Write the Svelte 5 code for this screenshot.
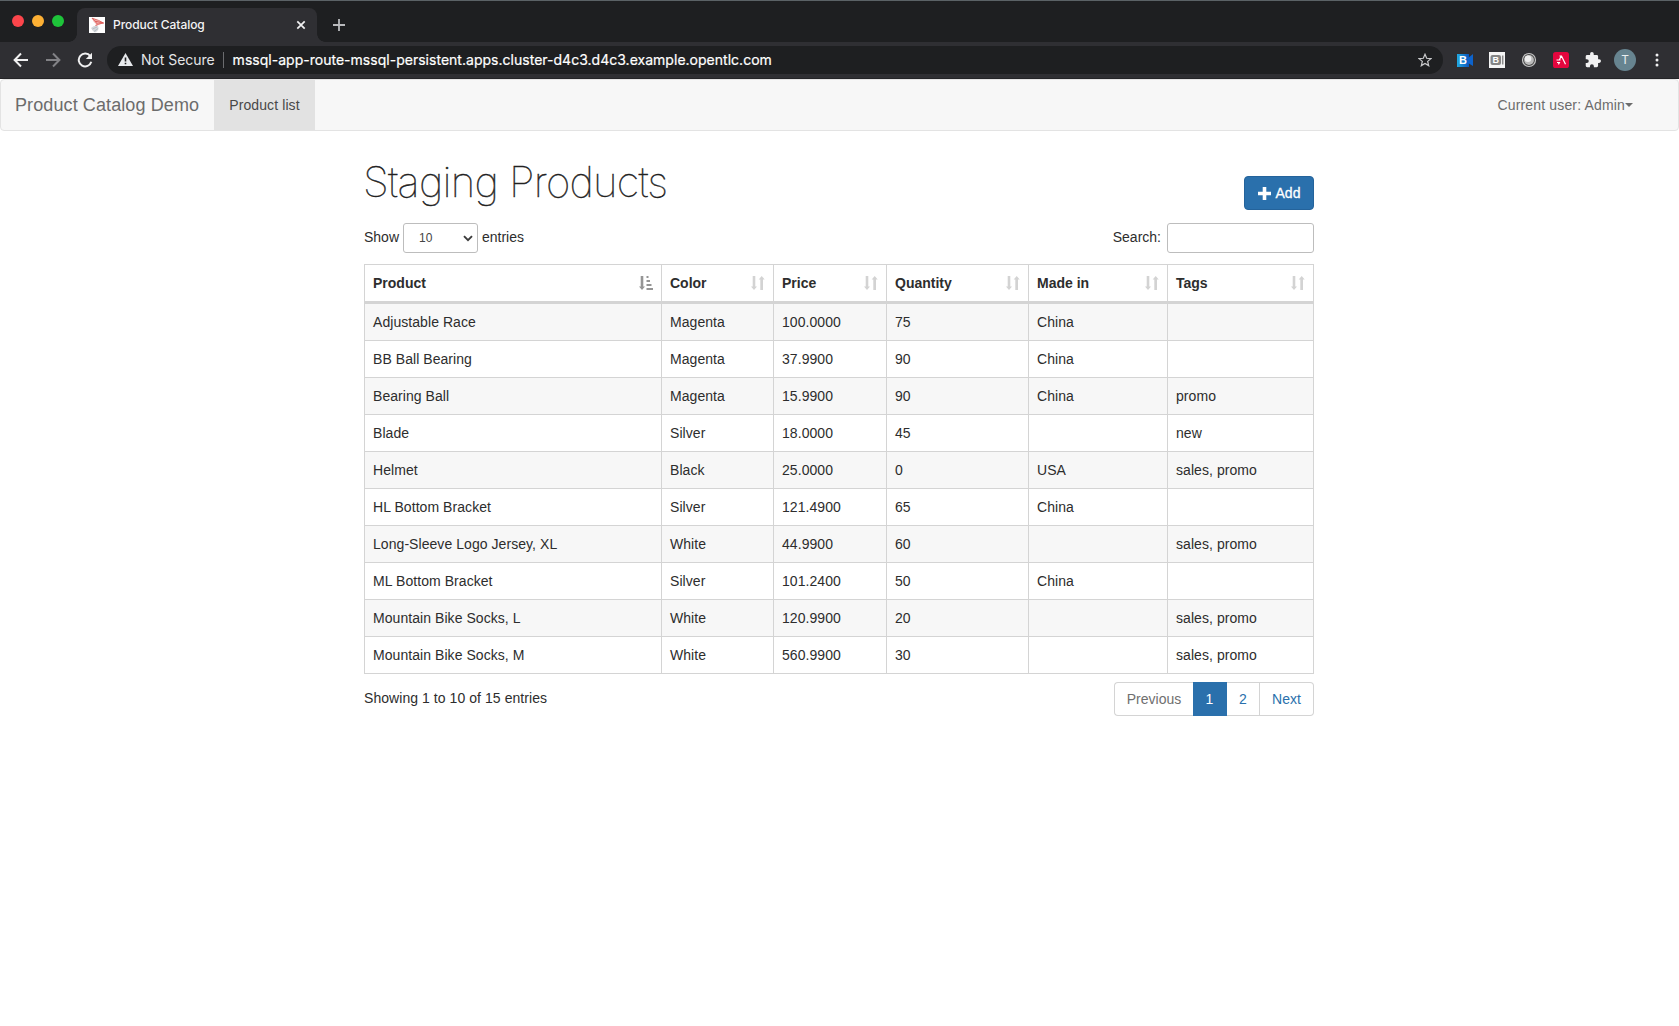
<script>
  const columns = ['Product', 'Color', 'Price', 'Quantity', 'Made in', 'Tags'];
  const rows = [
    ['Adjustable Race', 'Magenta', '100.0000', '75', 'China', ''],
    ['BB Ball Bearing', 'Magenta', '37.9900', '90', 'China', ''],
    ['Bearing Ball', 'Magenta', '15.9900', '90', 'China', 'promo'],
    ['Blade', 'Silver', '18.0000', '45', '', 'new'],
    ['Helmet', 'Black', '25.0000', '0', 'USA', 'sales, promo'],
    ['HL Bottom Bracket', 'Silver', '121.4900', '65', 'China', ''],
    ['Long-Sleeve Logo Jersey, XL', 'White', '44.9900', '60', '', 'sales, promo'],
    ['ML Bottom Bracket', 'Silver', '101.2400', '50', 'China', ''],
    ['Mountain Bike Socks, L', 'White', '120.9900', '20', '', 'sales, promo'],
    ['Mountain Bike Socks, M', 'White', '560.9900', '30', '', 'sales, promo']
  ];
</script>

<div class="window">
  <header class="tabstrip">
    <div class="lights"><i class="red"></i><i class="amber"></i><i class="green"></i></div>
    <div class="tab">
      <svg class="favicon" width="16" height="16" viewBox="0 0 16 16">
        <rect width="16" height="16" fill="#fff" />
        <path d="M3 1.2 L8 3.2 L14.5 6 L9.5 8 L5 11 L7 7 L4.5 4.5Z" fill="#f3b5b2" />
        <path d="M3 1.2 L6 4.2 L14.5 6 L8.5 7.2 L4.5 11 M6 4.2 L8.5 7.2 M3 1.2 L9.5 3.4 L14.5 6" fill="none" stroke="#dc5a57" stroke-width=".9" />
        <path d="M2 11 Q5 8 9 9 Q11 13 6 15.5 Q4 15 2 11Z" fill="#d5d9dd" />
        <path d="M3.5 12 L8 10 M5 14.5 L9 11.5" stroke="#aab1b9" stroke-width=".7" />
      </svg>
      <span class="title">Product Catalog</span>
      <svg class="close" width="10" height="10" viewBox="0 0 10 10"><path d="M1.3 1.3 L8.7 8.7 M8.7 1.3 L1.3 8.7" stroke="#f1f1f2" stroke-width="1.7" /></svg>
    </div>
    <svg class="plus" width="12" height="12" viewBox="0 0 12 12"><path d="M6 0V12M0 6H12" stroke="#b9babd" stroke-width="1.8" /></svg>
  </header>

  <div class="toolbar">
    <svg class="nav" width="16" height="16" viewBox="0 0 16 16"><path d="M15 8H2 M8 1.5 L1.6 8 L8 14.5" fill="none" stroke="#f0f0f1" stroke-width="2" /></svg>
    <svg class="nav" width="16" height="16" viewBox="0 0 16 16"><path d="M1 8H14 M8 1.5 L14.4 8 L8 14.5" fill="none" stroke="#828286" stroke-width="2" /></svg>
    <svg class="nav" width="16" height="16" viewBox="0 0 16 16"><path d="M13.3 4.2 A6.4 6.4 0 1 0 14.3 9.8" fill="none" stroke="#f0f0f1" stroke-width="2" /><path d="M15 .8V7H8.8Z" fill="#f0f0f1" /></svg>
    <div class="address">
      <svg width="15" height="13" viewBox="0 0 15 13"><path d="M7.5 0 L15 13H0Z" fill="#e8eaed" /><path d="M7.5 4.6V8.6M7.5 9.8V11.3" stroke="#1e1f21" stroke-width="1.6" /></svg>
      <span class="secure">Not Secure</span>
      <span class="bar"></span>
      <span class="url">mssql-app-route-mssql-persistent.apps.cluster-d4c3.d4c3.example.opentlc.com</span>
      <svg class="star" width="14" height="14" viewBox="0 0 24 24"><path d="M12 2.2 L14.9 9 L22.2 9.6 L16.6 14.4 L18.3 21.6 L12 17.8 L5.7 21.6 L7.4 14.4 L1.8 9.6 L9.1 9Z" fill="none" stroke="#c9cacc" stroke-width="2.1" /></svg>
    </div>
    <div class="extensions">
      <svg width="16" height="16" viewBox="0 0 16 16">
        <defs><linearGradient id="cam"><stop offset="0" stop-color="#22a9e0" /><stop offset="1" stop-color="#0a55bd" /></linearGradient></defs>
        <rect y="2" width="12" height="13" fill="url(#cam)" /><path d="M11 6 L16 2V14L11 11Z" fill="#0d63cc" />
        <text x="2" y="12.300" class="glyph" fill="#fff">B</text>
      </svg>
      <svg width="16" height="16" viewBox="0 0 16 16">
        <rect width="16" height="16" fill="#f5f5f5" /><rect x="1.500" y="3" width="10.500" height="10" rx="2" fill="#858585" /><path d="M13.700 3.500V12.500" stroke="#8a8a8a" stroke-width="1.500" />
        <text x="3.600" y="11.400" class="glyph small" fill="#fff">B</text>
      </svg>
      <svg width="16" height="16" viewBox="0 0 16 16"><circle cx="8" cy="8" r="6.500" fill="#444" stroke="#c4c4c4" stroke-width="1.200" /><circle cx="8" cy="8" r="4.900" fill="#bcbcbc" /><circle cx="7" cy="6.700" r="3.300" fill="#eeeeee" /></svg>
      <svg width="16" height="16" viewBox="0 0 16 16"><rect width="16" height="16" rx="2.600" fill="#e4063e" /><path d="M6.500 4H8.500L12.500 12.300 M8 4.200 L6.400 8 M3.500 8H7.500 M4 10.500H6.400L5.400 12.400" fill="none" stroke="#fff" stroke-width="1.200" /></svg>
      <svg width="16" height="16" viewBox="1 1 22 22"><path d="M20.5 11H19V7a2 2 0 0 0-2-2h-4V3.500a2.500 2.500 0 0 0-5 0V5H4a2 2 0 0 0-2 2v3.800h1.500a2.700 2.700 0 0 1 0 5.400H2V20a2 2 0 0 0 2 2h3.800v-1.500a2.700 2.700 0 0 1 5.400 0V22H17a2 2 0 0 0 2-2v-4h1.500a2.500 2.500 0 0 0 0-5z" fill="#f0f0f1" /></svg>
      <span class="avatar">T</span>
      <svg class="dots" width="4" height="16" viewBox="0 0 4 16"><circle cx="2" cy="3" r="1.5" fill="#f0f0f1" /><circle cx="2" cy="8" r="1.5" fill="#f0f0f1" /><circle cx="2" cy="13" r="1.5" fill="#f0f0f1" /></svg>
    </div>
  </div>

  <nav class="navbar">
    <span class="brand">Product Catalog Demo</span>
    <span class="active">Product list</span>
    <span class="user">Current user: Admin<i class="caret"></i></span>
  </nav>

  <main>
    <div class="heading">
      <h1>Staging Products</h1>
      <button class="add">
        <svg width="13" height="13" viewBox="0 0 13 13"><path d="M6.500 0V13M0 6.500H13" stroke="#fff" stroke-width="3.6" /></svg>
        Add
      </button>
    </div>

    <div class="controls">
      <span class="show">Show</span>
      <div class="select"><span>10</span><svg width="10" height="7" viewBox="0 0 10 7"><path d="M1 1.200 L5 5.200 L9 1.200" fill="none" stroke="#3c3c3c" stroke-width="1.900" /></svg></div>
      <span class="entries">entries</span>
      <label for="search">Search:</label>
      <input id="search" type="text" />
    </div>

    <table>
      <colgroup><col class="c1" /><col class="c2" /><col class="c3" /><col class="c4" /><col class="c5" /><col class="c6" /></colgroup>
      <thead>
        <tr>
          {#each columns as name, i}
            <th>
              <div class="th">
                {name}
                {#if i === 0}
                  <svg width="14" height="14" viewBox="0 0 14 14" fill="#959595"><path d="M1.700 0H4.300V10.500H6L3 14L0 10.500H1.700Z M7.500 0H9.500V2H7.500Z M7.500 4H11V6H7.500Z M7.500 8H12.500V10H7.500Z M7.500 12H14V14H7.500Z" /></svg>
                {:else}
                  <svg width="14" height="14" viewBox="0 0 14 14" fill="#d3d3d3"><path d="M1.700 0H4.300V10.500H6L3 14L0 10.500H1.700Z M9.300 14H12V3.500H13.700L10.700 0L7.700 3.500H9.300Z" /></svg>
                {/if}
              </div>
            </th>
          {/each}
        </tr>
      </thead>
      <tbody>
        {#each rows as row}
          <tr>{#each row as cell}<td>{cell}</td>{/each}</tr>
        {/each}
      </tbody>
    </table>

    <div class="footer">
      <span>Showing 1 to 10 of 15 entries</span>
      <div class="pages">
        <span class="prev">Previous</span><span class="current">1</span><span class="two">2</span><span class="next">Next</span>
      </div>
    </div>
  </main>
</div>

<style>
  :global(body) { background: #fff; }
  .window, .window * { box-sizing: border-box; }
  .window {
    height: 1026px;
    overflow: hidden;
    font: 14px/20px "Liberation Sans", Arial, sans-serif;
    color: #2d2d2d;
  }
  svg { display: block; flex: none; }
  .tabstrip {
    height: 42px;
    display: flex;
    align-items: flex-start;
    background: #1e1f21;
    border-top: 1px solid #5b6266;
  }
  .lights { display: flex; gap: 8px; padding: 14px 0 0 12px; width: 77px; flex: none; }
  .lights i { width: 12px; height: 12px; border-radius: 50%; }
  .red { background: #fc454b; }
  .amber { background: #fdb034; }
  .green { background: #1ec43a; }
  .tab {
    position: relative;
    width: 240px;
    height: 34px;
    margin-top: 7px;
    padding: 0 12px;
    display: flex;
    align-items: center;
    background: #2f2f33;
    border-radius: 8px 8px 0 0;
    color: #f4f4f5;
    font: 500 12px/16px Inter, sans-serif;
  }
  .tab::before, .tab::after {
    content: "";
    position: absolute;
    bottom: 0;
    width: 8px;
    height: 8px;
  }
  .tab::before { left: -8px; background: radial-gradient(circle at 0 0, transparent 7.500px, #2f2f33 8px); }
  .tab::after { right: -8px; background: radial-gradient(circle at 100% 0, transparent 7.500px, #2f2f33 8px); }
  .title { margin-left: 8px; letter-spacing: -0.05px; }
  .close { margin-left: auto; margin-right: -1px; }
  .plus { margin: 18px 0 0 16px; }
  .toolbar {
    height: 37px;
    padding: 0 20px 1px 13px;
    display: flex;
    align-items: center;
    background: #2f2f33;
    border-bottom: 1px solid #242427;
  }
  .nav { margin-right: 16px; }
  .address {
    height: 28px;
    flex: 1;
    margin-left: -2px;
    padding: 0 11px;
    display: flex;
    align-items: center;
    border-radius: 14px;
    background: #1e1f21;
    color: #fff;
    font: 14px/20px Inter, sans-serif;
  }
  .secure { margin-left: 8px; color: #e4e5e7; letter-spacing: -0.05px; }
  .bar { width: 1px; height: 16px; margin: 0 9px 0 8px; background: #6b6c6f; }
  .url { letter-spacing: 0.02px; -webkit-text-stroke: 0.2px #fff; }
  .star { margin-left: auto; }
  .extensions { display: flex; align-items: center; gap: 16px; margin-left: 14px; }
  .glyph { font: bold 11px "Liberation Sans", sans-serif; }
  .glyph.small { font-size: 9px; }
  .avatar {
    width: 22px;
    height: 22px;
    margin: 0 -3px;
    border-radius: 50%;
    background: #678490;
    color: #e9eef0;
    text-align: center;
    font: 12px/22px Roboto, sans-serif;
  }
  .dots { margin-left: 6px; }
  .navbar {
    height: 52px;
    display: flex;
    border: 1px solid #e3e3e3;
    border-radius: 4px;
    background: #f7f7f7;
    line-height: 50px;
    color: #6c6c6c;
  }
  .brand { width: 213px; padding-left: 14px; font-size: 18px; letter-spacing: 0.1px; }
  .active { width: 101px; text-align: center; background: #e2e2e2; color: #484848; letter-spacing: 0.1px; }
  .user { margin-left: auto; padding-right: 45px; display: flex; align-items: center; letter-spacing: 0.16px; }
  .caret { border: 4px solid transparent; border-top-color: #6c6c6c; border-bottom: 0; }
  main { width: 950px; margin: 0 auto 0 364px; }
  .heading { height: 79px; display: flex; justify-content: space-between; align-items: flex-end; }
  h1 {
    margin: 0 0 2px -1px;
    font: 100 42px/52px Inter, sans-serif;
    letter-spacing: -0.8px;
    -webkit-text-stroke: 0.4px #222;
    color: #222;
  }
  .add {
    width: 70px;
    height: 34px;
    padding: 0;
    display: flex;
    gap: 5px;
    align-items: center;
    justify-content: center;
    border: 1px solid #24639b;
    border-radius: 4px;
    background: #2a70ac;
    color: #fff;
    font: 14px/20px "Liberation Sans", Arial, sans-serif;
    -webkit-text-stroke: 0.3px #fff;
  }
  .controls { height: 30px; margin-top: 13px; display: flex; align-items: center; }
  .show { width: 39px; }
  .show, .entries, label { padding-bottom: 2px; }
  .select {
    width: 75px;
    height: 30px;
    margin-right: 4px;
    padding: 0 4px 0 15px;
    display: flex;
    align-items: center;
    justify-content: space-between;
    border: 1px solid #bdbdbd;
    border-radius: 3px;
    font-size: 12px;
    color: #444;
  }
  label { margin-left: auto; margin-right: 6px; }
  input { width: 147px; height: 30px; border: 1px solid #bdbdbd; border-radius: 3px; background: #fff; }
  table { width: 950px; margin-top: 11px; table-layout: fixed; border-spacing: 0; border-top: 1px solid #d4d4d4; border-left: 1px solid #d4d4d4; }
  .c1 { width: 297px; }
  .c2 { width: 112px; }
  .c3 { width: 113px; }
  .c4 { width: 142px; }
  .c5 { width: 139px; }
  .c6 { width: 146px; }
  th { height: 39px; padding: 0 8px; text-align: left; border-right: 1px solid #d4d4d4; border-bottom: 3px solid #d4d4d4; }
  .th { display: flex; align-items: center; justify-content: space-between; }
  td { height: 37px; padding: 0 8px; border-right: 1px solid #d4d4d4; border-bottom: 1px solid #d4d4d4; letter-spacing: 0.06px; }
  tbody tr:nth-child(odd) { background: #f7f7f7; }
  .footer { margin-top: 8px; display: flex; justify-content: space-between; align-items: flex-start; }
  .footer > span { padding-top: 6px; letter-spacing: 0.06px; }
  .pages { display: flex; height: 34px; line-height: 32px; text-align: center; color: #2a70ac; }
  .pages span { border: 1px solid #d4d4d4; border-left: 0; }
  .pages .prev { width: 79px; border-left: 1px solid #d4d4d4; border-right: 0; border-radius: 4px 0 0 4px; color: #6f6f6f; }
  .pages .current { width: 34px; border-color: #2a70ac; background: #2a70ac; color: #fff; }
  .pages .two { width: 33px; }
  .pages .next { width: 54px; border-radius: 0 4px 4px 0; }
</style>
